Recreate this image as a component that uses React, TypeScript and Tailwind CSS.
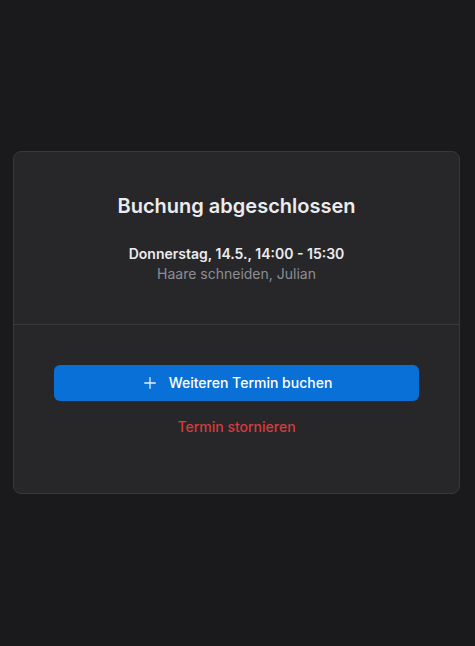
import { Plus } from 'lucide-react';

export default function App() {
  return (
    <div
      className="min-h-[646px] w-full bg-[#1a1a1c] pt-[151px] pl-[13px] pr-[15px]"
      style={{ fontFamily: 'Inter, "Noto Sans", sans-serif' }}
    >
      <div className="w-full rounded-lg border border-[#38383b] bg-[#27272a]">
        <div className="pt-10 pb-10 text-center">
          <h1 className="text-xl leading-7 font-semibold text-[#ececee] mb-6">Buchung abgeschlossen</h1>
          <p className="text-sm leading-5 font-semibold text-[#ececee]">Donnerstag, 14.5., 14:00 - 15:30</p>
          <p className="text-sm leading-5 text-[#8d8d93]">Haare schneiden, Julian</p>
        </div>
        <div className="border-t border-[#3a3a3d] px-10 pt-10 pb-[56px] flex flex-col items-center gap-4">
          <button
            type="button"
            className="w-full h-9 rounded-md bg-[#0870d7] text-white text-sm font-medium flex items-center justify-center gap-2.5"
          >
            <Plus size={18} strokeWidth={1.75} className="text-[#e3eefb]" />
            Weiteren Termin buchen
          </button>
          <button type="button" className="text-sm leading-5 font-medium text-[#d93a3a]">
            Termin stornieren
          </button>
        </div>
      </div>
    </div>
  );
}
